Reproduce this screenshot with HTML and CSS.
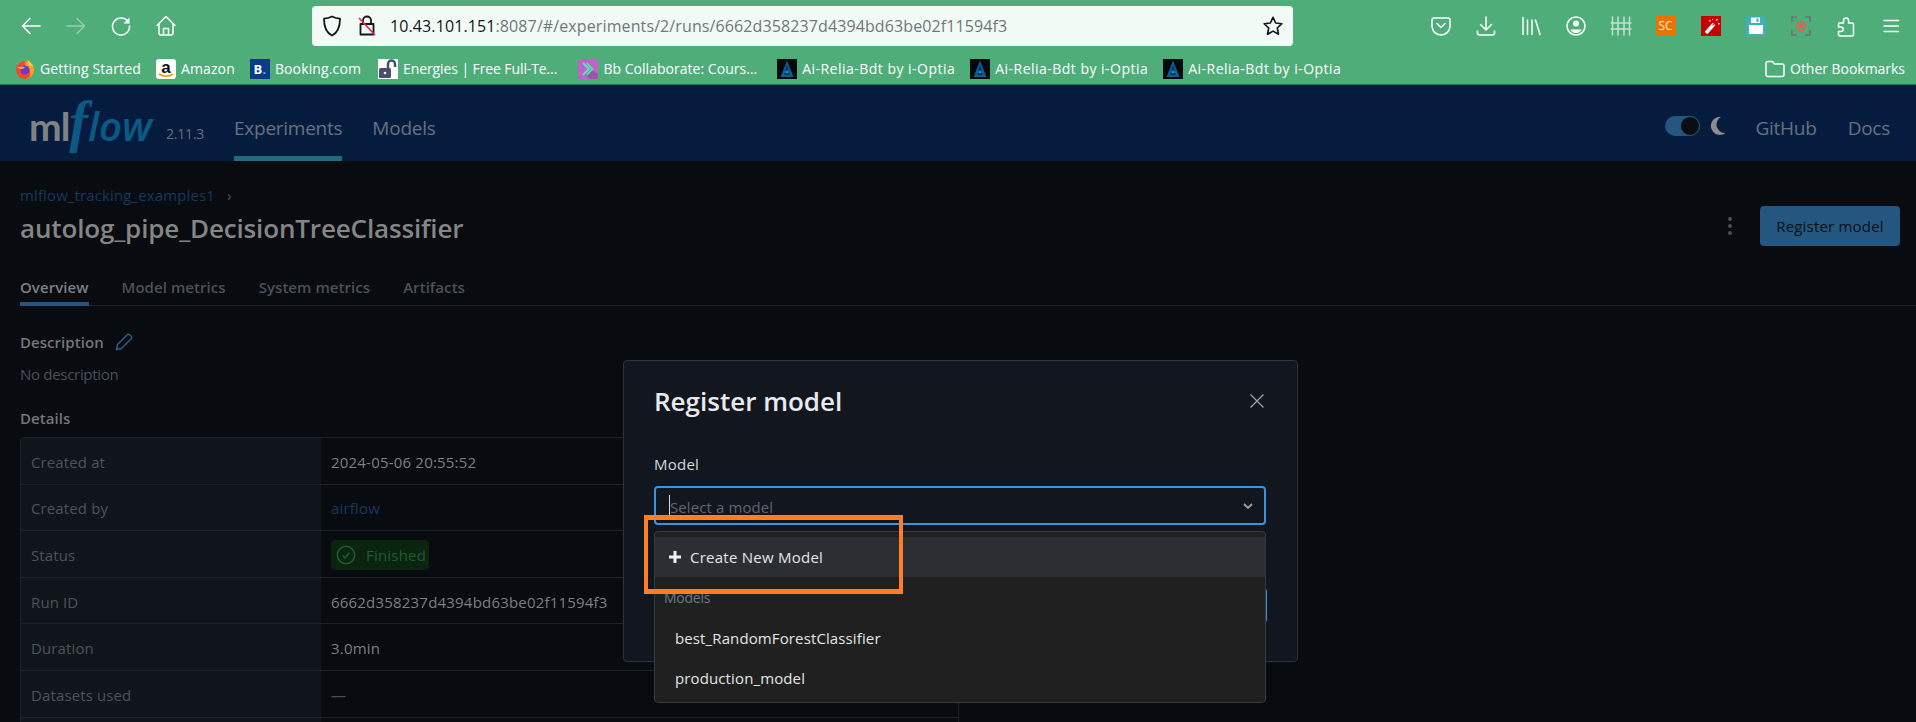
FILE: index.html
```html
<!DOCTYPE html>
<html lang="en">

<head>
 <meta charset="UTF-8">
 <title>MLflow - Register model</title>
 <link rel="stylesheet" href="styles.css">
</head>

<body>
 <div class="toolbar">
  <div class="tool-group">
   <span class="tool"><svg width="24" height="24" viewBox="0 0 24 24" class="ico"><path d="M21 12H3.500M11 4.500L3.500 12l7.500 7.500"/></svg></span>
   <span class="tool off"><svg width="24" height="24" viewBox="0 0 24 24" class="ico"><path d="M3 12h17.500M13 4.500l7.500 7.500-7.500 7.500"/></svg></span>
   <span class="tool"><svg width="24" height="24" viewBox="0 0 24 24" class="ico"><path d="M19.500 8.500A8.500 8.500 0 1 0 20.500 12"/><path d="M20.500 3.500v6h-6z" class="solid"/></svg></span>
   <span class="tool"><svg width="24" height="24" viewBox="0 0 24 24" class="ico"><path d="M3 11.500L12 2.500l9 9M5 9.500V19a2 2 0 0 0 2 2h10a2 2 0 0 0 2-2V9.500M9.500 21v-6.500h5V21"/></svg></span>
  </div>
  <div class="urlbar">
   <svg width="20" height="22" viewBox="0 0 20 22" class="dark"><path d="M10 1.500c3 1.500 5.500 2 8 2.200 0 8-1.500 13.500-8 16.800C3.500 17.200 2 11.700 2 3.700c2.500-.2 5-.7 8-2.200z"/></svg>
   <svg width="20" height="24" viewBox="0 0 20 24" class="lock"><path d="M6 10V6.500a4 4 0 0 1 8 0V10M3.500 10h13v10.500h-13z" class="dark"/><path d="M2 4l16 17" class="strike"/></svg>
   <span class="url"><b>10.43.101.151</b>:8087/#/experiments/2/runs/6662d358237d4394bd63be02f11594f3</span>
   <svg width="22" height="22" viewBox="0 0 24 24" class="dark star"><path d="M12 2.500l2.900 6.200 6.800.8-5 4.700 1.300 6.800-6-3.400-6 3.400 1.300-6.800-5-4.700 6.800-.8z"/></svg>
  </div>
  <div class="tool-group right">
   <span class="tool"><svg width="22" height="22" viewBox="0 0 22 22" class="ico"><path d="M4 3h14a2 2 0 0 1 2 2v6a9 9 0 0 1-18 0V5a2 2 0 0 1 2-2zM7 8.500l4 4 4-4"/></svg></span>
   <span class="tool"><svg width="22" height="22" viewBox="0 0 22 22" class="ico"><path d="M11 2v13M5.500 9.500L11 15l5.500-5.500M2.500 16v2a2 2 0 0 0 2 2h13a2 2 0 0 0 2-2v-2"/></svg></span>
   <span class="tool"><svg width="22" height="22" viewBox="0 0 22 22" class="ico"><path d="M3 2.500v17M7.500 5v14.500M12 5v14.500M15.500 5l4.500 14.500"/></svg></span>
   <span class="tool"><svg width="22" height="22" viewBox="0 0 22 22" class="ico"><circle cx="11" cy="11" r="9"/><circle cx="11" cy="8.500" r="3" class="solid"/><path d="M5.500 14.500h11c-.8 2-2.800 3.500-5.500 3.500s-4.700-1.500-5.500-3.500z" class="solid"/></svg></span>
   <span class="tool"><svg width="22" height="22" viewBox="0 0 22 22" class="ico fence"><path d="M2.500 2v18M8 2v18M14 2v18M19.500 2v18M1 8h20M1 14h20" /></svg></span>
   <span class="tool"><span class="ext-sc">SC</span></span>
   <span class="tool"><svg width="20" height="20" viewBox="0 0 20 20"><rect width="20" height="20" fill="#c70000"/><path d="M5 17L13 8" stroke="#fff" stroke-width="3.500"/><path d="M11.500 9.500L13.500 7.300" stroke="#c70000" stroke-width="1"/><path d="M8 4h1.500v1.500H8zM15 3h1.500v1.500H15zM17 7h1.500v1.500H17zM11 3h1v1h-1z" fill="#fff"/></svg></span>
   <span class="tool"><svg width="20" height="20" viewBox="0 0 20 20"><path d="M0 0h16l4 4v16H0z" fill="#3fb0b8"/><path d="M3 9h14v9H3z" fill="#fff"/><path d="M5 1.500h9V7H5z" fill="#fff"/><path d="M10.500 2.500h2V6h-2z" fill="#3fb0b8"/></svg></span>
   <span class="tool"><svg width="20" height="20" viewBox="0 0 20 20"><path d="M1 6V1h5M14 1h5v5M19 14v5h-5M6 19H1v-5" fill="none" stroke="#6d7a75" stroke-width="2"/><circle cx="10" cy="10" r="4.500" fill="none" stroke="#ee5a4d" stroke-width="1.500"/><circle cx="10" cy="10" r="2.200" fill="#ee5a4d"/></svg></span>
   <span class="tool"><svg width="22" height="22" viewBox="0 0 22 22" class="ico"><path d="M4 8h4.500V5.500a2.500 2.500 0 0 1 5 0V8H17a1.500 1.500 0 0 1 1.500 1.500v10a1.500 1.500 0 0 1-1.500 1.500H5a1.500 1.500 0 0 1-1.500-1.500V16.500H6a2 2 0 0 0 0-4.500H3.500V9.500z"/></svg></span>
   <span class="tool"><svg width="18" height="18" viewBox="0 0 18 18" class="ico"><path d="M2 3.500h14.500M2 9h14.500M2 14.500h14.500"/></svg></span>
  </div>
 </div>

 <svg width="0" height="0" class="sprite">
  <symbol id="ai-icon" viewBox="0 0 20 20">
   <rect width="20" height="20" fill="#03090f"/>
   <path d="M10 1.500L16.500 18h-13z" fill="#0b5f95"/>
   <path d="M10 6L12.500 16h-5z" fill="#06233b"/>
   <circle cx="10" cy="13" r="1.800" fill="#1a86c6"/>
  </symbol>
 </svg>

 <div class="bookmarks">
  <a class="mark"><svg width="20" height="20" viewBox="0 0 20 20"><circle cx="10" cy="11" r="9" fill="#f0482f"/><path d="M10 2c5 1 9 4 9 9a9 9 0 0 1-9 9c4 0 6-4 5-8-.5-2.500-2.500-4-5-4z" fill="#ff9f2a"/><path d="M12 .500c3 2 6 5 6.500 8L14 6z" fill="#ffc93c"/><circle cx="10" cy="11" r="4.500" fill="#6a3bc9"/><path d="M2 8c2 .500 5-1 8 0-1 2-3 2-5 2z" fill="#ffa436"/></svg><span>Getting Started</span></a>
  <a class="mark"><svg width="20" height="20" viewBox="0 0 20 20"><rect width="20" height="20" rx="3" fill="#fff"/><text x="10" y="14" class="amazon-a">a</text><path d="M3 15c4 3 10 3 14 0" fill="none" stroke="#f90" stroke-width="1.600"/></svg><span>Amazon</span></a>
  <a class="mark"><span class="fav-booking">B<i>.</i></span><span>Booking.com</span></a>
  <a class="mark mark-tight"><svg width="20" height="20" viewBox="0 0 20 20"><rect width="20" height="20" fill="#fff"/><rect x="1" y="9" width="12" height="10" rx="1.500" fill="#4a4e6d"/><path d="M10 9V5a3.500 3.500 0 0 1 7 0v3" fill="none" stroke="#4a4e6d" stroke-width="2.500"/><circle cx="7" cy="14" r="1.300" fill="#fff"/></svg><span>Energies | Free Full-Te…</span></a>
  <a class="mark mark-bb"><svg width="20" height="20" viewBox="0 0 20 20"><rect width="20" height="20" rx="2" fill="#bd63c9"/><path d="M20 18a2 2 0 0 1-2 2H12L6 15l6-5 8 5z" fill="#a24fae"/><path d="M5 4l6 6-6 6" fill="none" stroke="#67d9d2" stroke-width="2"/><path d="M8.500 4l6 6-6 6" fill="none" stroke="#58e08f" stroke-width="2"/></svg><span>Bb Collaborate: Cours…</span></a>
  <a class="mark mark-wide mark-first-ai"><svg width="20" height="20"><use href="#ai-icon"/></svg><span>Ai-Relia-Bdt by i-Optia</span></a>
  <a class="mark mark-wide"><svg width="20" height="20"><use href="#ai-icon"/></svg><span>Ai-Relia-Bdt by i-Optia</span></a>
  <a class="mark mark-wide"><svg width="20" height="20"><use href="#ai-icon"/></svg><span>Ai-Relia-Bdt by i-Optia</span></a>
  <a class="mark mark-other"><svg width="20" height="18" viewBox="0 0 20 18" class="ico"><path d="M3 1.500h4.500l2 2.500H17a2 2 0 0 1 2 2v8.500a2 2 0 0 1-2 2H3a2 2 0 0 1-2-2v-11a2 2 0 0 1 2-2z"/></svg><span>Other Bookmarks</span></a>
 </div>

 <header class="topnav">
  <a class="logo"><span class="logo-ml">ml</span><span class="logo-f">f</span><span class="logo-low">low</span></a>
  <span class="version">2.11.3</span>
  <a class="navlink active">Experiments</a>
  <a class="navlink">Models</a>
  <div class="nav-right">
   <span class="toggle"><span class="knob"></span></span>
   <svg width="16" height="18" viewBox="0 0 16 18" class="moon"><path d="M11 0a9 9 0 1 0 4.500 16A8.500 8.500 0 0 1 11 0z"/></svg>
   <a class="navlink github">GitHub</a>
   <a class="navlink">Docs</a>
  </div>
 </header>

 <main class="page">
  <div class="run-head">
   <div>
    <div class="crumb"><a>mlflow_tracking_examples1</a><span class="crumb-sep">›</span></div>
    <h1>autolog_pipe_DecisionTreeClassifier</h1>
   </div>
   <div class="actions">
    <span class="kebab"><i></i><i></i><i></i></span>
    <button class="btn-register">Register model</button>
   </div>
  </div>

  <ul class="tabs">
   <li class="current">Overview</li>
   <li>Model metrics</li>
   <li>System metrics</li>
   <li>Artifacts</li>
  </ul>

  <h2 class="desc-title">Description <svg width="18" height="18" viewBox="0 0 18 18" class="pencil"><path d="M1.500 16.500l1-5L12 2a2 2 0 0 1 3 0l1 1a2 2 0 0 1 0 3l-9.500 9.500z"/></svg></h2>
  <p class="no-desc">No description</p>
  <h2 class="details-title">Details</h2>

  <table class="details">
   <tr><th>Created at</th><td>2024-05-06 20:55:52</td></tr>
   <tr><th>Created by</th><td><a>airflow</a></td></tr>
   <tr><th>Status</th><td><span class="badge"><svg width="20" height="20" viewBox="0 0 20 20"><circle cx="10" cy="10" r="8.700"/><path d="M6.500 10.300l2.500 2.500 4.500-5"/></svg>Finished</span></td></tr>
   <tr><th>Run ID</th><td>6662d358237d4394bd63be02f11594f3</td></tr>
   <tr><th>Duration</th><td>3.0min</td></tr>
   <tr><th>Datasets used</th><td class="muted">—</td></tr>
   <tr><th></th><td></td></tr>
  </table>
 </main>

 <div class="modal">
  <div class="modal-head">
   <h3>Register model</h3>
   <svg width="16" height="16" viewBox="0 0 16 16" class="close"><path d="M1.500 1.500l13 13M14.500 1.500l-13 13"/></svg>
  </div>
  <label class="field-label">Model</label>
  <div class="select">
   <span class="caret"></span><span class="placeholder">Select a model</span>
   <svg width="12" height="12" viewBox="0 0 12 12" class="chev"><path d="M2 4l4 4 4-4"/></svg>
  </div>
  <div class="modal-foot"><button class="btn-primary">Register</button></div>

  <div class="dropdown">
   <div class="opt-create"><svg width="14" height="14" viewBox="0 0 14 14"><path d="M7 1v12M1 7h12"/></svg>Create New Model</div>
   <div class="opt-group">Models</div>
   <div class="opt">best_RandomForestClassifier</div>
   <div class="opt">production_model</div>
  </div>
 </div>

 <div class="callout"></div>
</body>

</html>
```

FILE: styles.css
```css
* {
 box-sizing: border-box;
}

html, body {
 height: 722px;
 overflow: hidden;
}

body {
 margin: 0;
 position: relative;
 background-color: #080b0f;
 font-family: 'Open Sans', 'Noto Sans', sans-serif;
 font-size: 15px;
 color: #666;
}

.sprite {
 position: absolute;
}

/* browser chrome */

.toolbar {
 height: 51px;
 background-color: #4fad7a;
 display: flex;
 align-items: center;
 padding: 0 3px 0 8px;
}

.tool-group {
 display: flex;
}

.tool-group.right {
 margin-left: auto;
}

.tool {
 width: 45px;
 height: 30px;
 display: flex;
 align-items: center;
 justify-content: center;
}

.tool.off {
 opacity: .4;
}

.ico path, .ico circle {
 fill: none;
 stroke: #fff;
 stroke-width: 1.500;
 stroke-linecap: round;
 stroke-linejoin: round;
}

.ico .solid {
 fill: #fff;
 stroke: none;
}

.ico.fence {
 opacity: .65;
}

.ext-sc {
 width: 20px;
 height: 20px;
 background-color: #ec7200;
 color: #ffe9d2;
 font-size: 12px;
 line-height: 20px;
 text-align: center;
}

.urlbar {
 margin-left: 124px;
 width: 981px;
 height: 40px;
 background-color: #f1faf5;
 border-radius: 4px;
 display: flex;
 align-items: center;
 padding: 0 9px 0 10px;
}

.urlbar svg path {
 fill: none;
 stroke-width: 1.800;
 stroke-linejoin: round;
}

.urlbar .dark, .urlbar path.dark {
 stroke: #15141a;
}

.urlbar .strike {
 stroke: #e22850;
}

.lock {
 margin-left: 15px;
}

.url {
 margin-left: 13px;
 font-size: 16px;
 letter-spacing: .11px;
 color: #70777a;
 white-space: nowrap;
}

.url b {
 font-weight: 400;
 color: #15141a;
}

.star {
 margin-left: auto;
}

.bookmarks {
 height: 34px;
 padding: 2px 0 0 15px;
 background-color: #4fad7a;
 border-bottom: 1px solid #1c7d4d;
 display: flex;
 align-items: center;
 gap: 15px;
 color: #fff;
 font-size: 14px;
 letter-spacing: .13px;
}

.mark {
 display: flex;
 align-items: center;
 gap: 5px;
 white-space: nowrap;
}

.mark-tight {
 letter-spacing: -.1px;
 margin-left: 2px;
}

.mark-bb {
 margin-left: 6px;
 letter-spacing: .03px;
}

.mark-wide {
 letter-spacing: .48px;
}

.mark-first-ai {
 margin-left: 5px;
}

.mark-other {
 margin-left: auto;
 margin-right: 11px;
 letter-spacing: -.03px;
}

.amazon-a {
 font-family: 'Liberation Sans', sans-serif;
 font-size: 17px;
 font-weight: 700;
 text-anchor: middle;
 fill: #111;
}

.fav-booking {
 width: 20px;
 height: 20px;
 background-color: #0c3b86;
 color: #fff;
 font-size: 13px;
 font-weight: 700;
 line-height: 20px;
 text-align: center;
}

.fav-booking i {
 font-style: normal;
 color: #4db4ea;
}

/* mlflow header */

.topnav {
 height: 76px;
 background-color: #061c3f;
 display: flex;
 align-items: stretch;
 padding-left: 29px;
 font-size: 19px;
}

.logo {
 display: flex;
 align-items: baseline;
 line-height: 74px;
 width: 132px;
 color: #7f8284;
}

.logo-ml {
 font-family: 'Lato', sans-serif;
 font-weight: 700;
 font-size: 39px;
 letter-spacing: -1px;
}

.logo-f {
 font-family: 'Liberation Serif', serif;
 font-style: italic;
 font-weight: 700;
 font-size: 56px;
 color: #0b5a84;
}

.logo-low {
 font-family: 'Open Sans', sans-serif;
 font-style: italic;
 font-weight: 600;
 font-size: 40px;
 color: #0b5a84;
}

.version {
 width: 73px;
 padding: 39px 0 0 5px;
 color: #686e77;
 font-size: 14px;
 letter-spacing: -.2px;
}

.navlink {
 color: #667180;
 line-height: 86px;
 letter-spacing: -.25px;
 margin-right: 30px;
}

.navlink.active {
 border-bottom: 5px solid #226b7e;
 height: 76px;
}

.nav-right {
 margin-left: auto;
 display: flex;
 align-items: center;
}

.nav-right .navlink {
 margin-right: 26px;
 align-self: stretch;
}

.nav-right .github {
 margin-right: 31px;
}

.toggle {
 width: 35px;
 height: 20px;
 border-radius: 10px;
 background-color: #24567f;
 display: flex;
 justify-content: flex-end;
 margin-top: 6px;
}

.knob {
 width: 20px;
 height: 20px;
 border-radius: 50%;
 background-color: #0a0e12;
 border: 1px solid #24567f;
}

.moon {
 margin: 6px 29px 0 10px;
}

.moon path {
 fill: #8b8d8f;
}

/* run page */

.page {
 padding: 25px 16px 0 20px;
}

.run-head {
 display: flex;
 justify-content: space-between;
 align-items: flex-end;
}

.crumb {
 height: 20px;
 line-height: 18px;
 letter-spacing: .12px;
 color: #15395e;
}

.crumb-sep {
 margin-left: 12px;
 color: #555;
}

h1 {
 margin: 5px 0 2px;
 font-size: 26px;
 line-height: 34px;
 font-weight: 600;
 letter-spacing: -.15px;
 color: #858585;
}

.actions {
 display: flex;
 align-items: center;
 margin-bottom: 1px;
}

.kebab {
 display: flex;
 flex-direction: column;
 gap: 3px;
 margin-right: 28px;
}

.kebab i {
 width: 4px;
 height: 4px;
 border-radius: 50%;
 background-color: #4a5058;
}

.btn-register {
 width: 140px;
 height: 40px;
 border: 0;
 border-radius: 4px;
 background-color: #24567f;
 color: #0b1017;
 font: inherit;
 letter-spacing: .2px;
}

.tabs {
 list-style-type: none;
 margin: 27px -16px 0 0;
 padding: 0;
 display: flex;
 gap: 33px;
 border-bottom: 1px solid #1d2228;
 height: 32px;
 font-weight: 600;
 letter-spacing: .06px;
 color: #4a5159;
}

.tabs li {
 line-height: 26px;
 height: 32px;
}

.tabs li.current {
 color: #7d8084;
 border-bottom: 4px solid #24567f;
}

.desc-title, .details-title {
 margin: 26px 0 0;
 font-size: 15px;
 line-height: 20px;
 font-weight: 600;
 letter-spacing: .05px;
 color: #73767a;
 display: flex;
 align-items: center;
}

.details-title {
 margin-top: 24px;
}

.pencil {
 margin-left: 11px;
}

.pencil path {
 fill: none;
 stroke: #2a5d88;
 stroke-width: 1.500;
}

.no-desc {
 margin: 12px 0 0;
 line-height: 20px;
 letter-spacing: -.3px;
 color: #4a5058;
}

.details {
 margin-top: 9px;
 width: 939px;
 border-collapse: separate;
 border-spacing: 0;
 border: 1px solid #1d2228;
 border-radius: 4px;
 table-layout: fixed;
 letter-spacing: .12px;
}

.details th, .details td {
 height: 46.600px;
 padding: 2px 0 0 10px;
 border-bottom: 1px solid #1d2228;
 font-weight: 400;
 text-align: left;
}

.details th {
 width: 300px;
 background-color: #10151b;
 color: #4d5359;
}

.details td {
 color: #7c7f82;
 letter-spacing: .2px;
}

.details td a {
 color: #15395e;
}

.details td.muted {
 color: #4a4f55;
}

.badge {
 display: inline-flex;
 align-items: center;
 gap: 10px;
 height: 30px;
 width: 98px;
 padding-left: 5px;
 border-radius: 4px;
 background-color: #0a2410;
 color: #1d5c30;
}

.badge svg {
 fill: none;
 stroke: #1d5c30;
 stroke-width: 1.500;
}

/* dialog */

.modal {
 position: absolute;
 left: 623px;
 top: 360px;
 width: 675px;
 height: 302px;
 padding: 23px 31px 0 30px;
 background-color: #12161e;
 border: 1px solid #2c333b;
 border-radius: 4px;
}

.modal-head {
 display: flex;
 justify-content: space-between;
 align-items: center;
 height: 34px;
}

h3 {
 margin: 0;
 font-size: 26px;
 line-height: 34px;
 font-weight: 600;
 color: #e8eaed;
}

.close path {
 fill: none;
 stroke: #9aa0a6;
 stroke-width: 1.300;
}

.close {
 margin-right: 1px;
}

.field-label {
 display: block;
 margin-top: 37px;
 height: 20px;
 line-height: 18px;
 letter-spacing: .25px;
 color: #d5d8db;
}

.select {
 margin-top: 11px;
 height: 39px;
 border: 2px solid #3a93dc;
 border-radius: 4px;
 display: flex;
 align-items: center;
 padding: 2px 10px 0 13px;
 letter-spacing: .1px;
}

.caret {
 width: 1px;
 height: 20px;
 background-color: #d5d8db;
 margin-top: -4px;
}

.placeholder {
 color: #5d6670;
}

.chev {
 margin-left: auto;
 margin-top: -2px;
}

.chev path {
 fill: none;
 stroke: #9aa0a6;
 stroke-width: 1.800;
}

.modal-foot {
 margin-top: 63px;
 display: flex;
 justify-content: flex-end;
}

.btn-primary {
 width: 100px;
 height: 35px;
 margin-right: -1px;
 border: 0;
 border-radius: 4px;
 background-color: #3a93dc;
 color: #0b1017;
}

.dropdown {
 position: absolute;
 left: 30px;
 top: 170px;
 width: 612px;
 height: 172px;
 padding-top: 5px;
 background-color: #202020;
 border: 1px solid #343a40;
 border-radius: 4px;
 color: #e3e5e7;
 letter-spacing: .12px;
}

.opt-create {
 height: 40px;
 background-color: #2b2f33;
 display: flex;
 align-items: center;
 gap: 8px;
 padding-left: 13px;
 letter-spacing: .25px;
}

.opt-create svg path {
 stroke: #f0f0f0;
 stroke-width: 3;
}

.opt-group {
 height: 42px;
 line-height: 42px;
 padding-left: 9px;
 font-size: 14px;
 letter-spacing: -.25px;
 color: #6f777f;
}

.opt {
 height: 40px;
 line-height: 38px;
 padding-left: 20px;
}

/* orange box drawn on the screenshot */

.callout {
 position: absolute;
 left: 644px;
 top: 515px;
 width: 259px;
 height: 79px;
 border: solid #fd7e23;
 border-width: 5px 4px;
}
```
